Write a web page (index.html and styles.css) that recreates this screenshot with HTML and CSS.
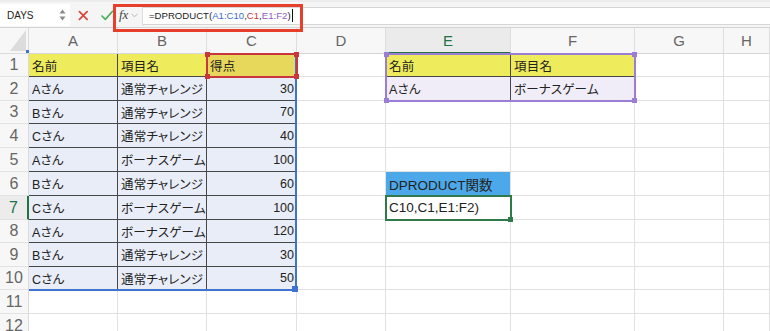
FILE: index.html
```html
<!DOCTYPE html>
<html lang="ja">
<head>
<meta charset="utf-8">
<title>DPRODUCT</title>
<link rel="stylesheet" href="styles.css">
</head>
<body>
<div class="app">
  <div class="fbar">
    <div class="namebox">
      <span class="nametext">DAYS</span>
      <svg class="spin" width="7" height="12" viewBox="0 0 7 12"><path d="M3.5 0.5 L6.5 4.5 L0.5 4.5 Z" fill="#8a8a8a"/><path d="M3.5 11.5 L6.5 7.5 L0.5 7.5 Z" fill="#8a8a8a"/></svg>
    </div>
    <div class="fbtns">
      <svg width="11" height="11" viewBox="0 0 11 11"><path d="M1.5 1.5 L9.5 9.5 M9.5 1.5 L1.5 9.5" stroke="#d9453b" stroke-width="1.8" stroke-linecap="round"/></svg>
      <svg width="13" height="11" viewBox="0 0 13 11"><path d="M1 6 L4.5 9.5 L12 1.2" stroke="#4cae5a" stroke-width="1.7" fill="none" stroke-linecap="round" stroke-linejoin="round"/></svg>
    </div>
    <div class="fxzone">
      <span class="fx">fx</span>
      <svg width="7" height="5" viewBox="0 0 7 5"><path d="M0.5 0.8 L3.5 3.8 L6.5 0.8" stroke="#b5b5b5" stroke-width="1" fill="none"/></svg>
    </div>
    <div class="finput">=DPRODUCT(<span class="rb">A1:C10</span>,<span class="rr">C1</span>,<span class="rp">E1:F2</span>)<span class="caret"></span></div>
    <div class="redbox"></div>
  </div>

  <div class="sheet">
    <div class="corner"><svg width="29" height="26" viewBox="0 0 29 26"><path d="M26 2 L26 23 L10 23 Z" fill="#dcdcdc"/></svg></div>
    <div class="ch">A</div><div class="ch">B</div><div class="ch">C</div><div class="ch">D</div><div class="ch act">E</div><div class="ch">F</div><div class="ch">G</div><div class="ch">H</div>

    <div class="rh">1</div>
    <div class="c jp y vr hb">名前</div><div class="c jp y vr hb">項目名</div><div class="c jp ys hb">得点</div><div class="c"></div>
    <div class="c jp y vr hb">名前</div><div class="c jp y hb">項目名</div><div class="c"></div><div class="c"></div>

    <div class="rh">2</div>
    <div class="c jp d vr hb">Aさん</div><div class="c jp d vr hb">通常チャレンジ</div><div class="c d hb num">30</div><div class="c"></div>
    <div class="c jp l vr">Aさん</div><div class="c jp l">ボーナスゲーム</div><div class="c"></div><div class="c"></div>

    <div class="rh">3</div>
    <div class="c jp d vr hb">Bさん</div><div class="c jp d vr hb">通常チャレンジ</div><div class="c d hb num">70</div><div class="c"></div>
    <div class="c"></div><div class="c"></div><div class="c"></div><div class="c"></div>

    <div class="rh">4</div>
    <div class="c jp d vr hb">Cさん</div><div class="c jp d vr hb">通常チャレンジ</div><div class="c d hb num">40</div><div class="c"></div>
    <div class="c"></div><div class="c"></div><div class="c"></div><div class="c"></div>

    <div class="rh">5</div>
    <div class="c jp d vr hb">Aさん</div><div class="c jp d vr hb">ボーナスゲーム</div><div class="c d hb num">100</div><div class="c"></div>
    <div class="c"></div><div class="c"></div><div class="c"></div><div class="c"></div>

    <div class="rh">6</div>
    <div class="c jp d vr hb">Bさん</div><div class="c jp d vr hb">通常チャレンジ</div><div class="c d hb num">60</div><div class="c"></div>
    <div class="c bl">DPRODUCT関数</div><div class="c"></div><div class="c"></div><div class="c"></div>

    <div class="rh act">7</div>
    <div class="c jp d vr hb">Cさん</div><div class="c jp d vr hb">ボーナスゲーム</div><div class="c d hb num">100</div><div class="c"></div>
    <div class="c">C10,C1,E1:F2)</div><div class="c"></div><div class="c"></div><div class="c"></div>

    <div class="rh">8</div>
    <div class="c jp d vr hb">Aさん</div><div class="c jp d vr hb">ボーナスゲーム</div><div class="c d hb num">120</div><div class="c"></div>
    <div class="c"></div><div class="c"></div><div class="c"></div><div class="c"></div>

    <div class="rh">9</div>
    <div class="c jp d vr hb">Bさん</div><div class="c jp d vr hb">通常チャレンジ</div><div class="c d hb num">30</div><div class="c"></div>
    <div class="c"></div><div class="c"></div><div class="c"></div><div class="c"></div>

    <div class="rh">10</div>
    <div class="c jp d vr">Cさん</div><div class="c jp d vr">通常チャレンジ</div><div class="c d num">50</div><div class="c"></div>
    <div class="c"></div><div class="c"></div><div class="c"></div><div class="c"></div>

    <div class="rh">11</div>
    <div class="c"></div><div class="c"></div><div class="c"></div><div class="c"></div>
    <div class="c"></div><div class="c"></div><div class="c"></div><div class="c"></div>

    <div class="rh">12</div>
    <div class="c"></div><div class="c"></div><div class="c"></div><div class="c"></div>
    <div class="c"></div><div class="c"></div><div class="c"></div><div class="c"></div>

    <div class="rng blue"><i class="hd tl"></i><i class="hd br"></i></div>
    <div class="rng red"><i class="hd tl"></i><i class="hd tr"></i><i class="hd bl2"></i><i class="hd br"></i></div>
    <div class="rng purple"><i class="hd tl"></i><i class="hd tr"></i><i class="hd bl2"></i><i class="hd br"></i></div>
    <div class="rng green"><i class="hd br"></i></div>
  </div>
</div>
</body>
</html>
```

FILE: styles.css
```css
* { box-sizing: border-box; }
html, body { margin: 0; padding: 0; background: #fff; }
body { width: 770px; height: 331px; overflow: hidden; }

.app { width: 770px; height: 331px; overflow: hidden; }

.fbar {
  position: relative;
  height: 28px;
  display: flex;
  align-items: flex-start;
  background: #f5f5f5;
  border-top: 2px solid #ececec;
}
.namebox {
  width: 70px;
  height: 22px;
  margin-top: 2px;
  background: #fff;
  display: flex;
  align-items: center;
  justify-content: space-between;
  padding: 0 4px 0 7px;
}
.nametext {
  font-family: "Liberation Sans", Arial, sans-serif;
  font-size: 10px;
  color: #222;
}
.spin { display: block; }
.fbtns {
  display: flex;
  align-items: center;
  gap: 12px;
  height: 22px;
  margin-top: 2px;
  padding-left: 8px;
  width: 43px;
}
.fxzone {
  display: flex;
  align-items: center;
  gap: 3px;
  height: 22px;
  margin-top: 2px;
  padding-left: 6px;
  width: 30px;
  border-right: 1px solid #dcdcdc;
}
.fx {
  font-family: "Liberation Serif", "Times New Roman", serif;
  font-style: italic;
  font-size: 13px;
  color: #444;
}
.finput {
  flex: 1;
  height: 18px;
  margin-top: 5px;
  background: #fff;
  border-top: 1px solid #d6d6d6;
  border-bottom: 1px solid #d6d6d6;
  padding-left: 6px;
  font-family: "Liberation Sans", Arial, sans-serif;
  font-size: 9.6px;
  line-height: 16px;
  color: #222;
  white-space: nowrap;
}
.rb { color: #3b6fc6; }
.rr { color: #c7343b; }
.rp { color: #8b5cc4; }
.caret {
  display: inline-block;
  width: 1px;
  height: 13px;
  background: #111;
  vertical-align: -3px;
  margin-left: 1px;
}
.redbox {
  position: absolute;
  left: 113px;
  top: 2px;
  width: 190px;
  height: 28px;
  border: 3px solid #e6402c;
  z-index: 5;
}

.sheet {
  position: relative;
  display: grid;
  grid-template-columns: 29px 89px 89px 90px 89px 125px 124px 89px 46px;
  grid-template-rows: 26px 23px 24px 23px 24px 24px 24px 24px 23px 24px 23px 24px 24px;
  border-top: 1px solid #d4d4d4;
  margin-top: -1px;
}
.corner {
  background: #f7f7f7;
  border-right: 1px solid #dadada;
  border-bottom: 1px solid #dadada;
}
.corner svg { display: block; }
.ch {
  background: #f7f7f7;
  border-right: 1px solid #dedede;
  border-bottom: 1px solid #d6d6d6;
  display: flex;
  align-items: center;
  justify-content: center;
  font-family: "Liberation Sans", Arial, sans-serif;
  font-size: 15px;
  color: #666;
}
.ch.act {
  background: #ebebeb;
  color: #217346;
  border-bottom: 2px solid #217346;
}
.rh {
  background: #f7f7f7;
  border-right: 1px solid #dadada;
  border-bottom: 1px solid #e2e2e2;
  display: flex;
  align-items: center;
  justify-content: center;
  font-family: "Liberation Sans", Arial, sans-serif;
  font-size: 16px;
  color: #666;
}
.rh.act {
  background: #ececec;
  color: #217346;
  border-right: 2px solid #217346;
}
.c {
  border-right: 1px solid #e1e1e1;
  border-bottom: 1px solid #e1e1e1;
  display: flex;
  align-items: center;
  padding: 0 3px;
  font-family: "Liberation Sans", "Noto Sans CJK JP", sans-serif;
  font-size: 13.5px;
  color: #222;
  white-space: nowrap;
  overflow: hidden;
}
.jp {
  font-size: 12.5px;
  font-feature-settings: "palt";
  letter-spacing: 0.2px;
}
.y { background: #eeeb5d; }
.ys { background: #e7d75a; }
.d { background: #e9edf8; }
.l { background: #f0ecf8; }
.bl { background: #4ca8e9; }
.vr { border-right: 1px solid #474747; }
.hb { border-bottom: 1px solid #474747; }
.num { justify-content: flex-end; padding-right: 2px; font-size: 12.5px; }

.rng { position: absolute; pointer-events: none; }
.rng .hd { position: absolute; width: 5px; height: 5px; }
.blue {
  left: 29px; top: 25px; width: 268px; height: 238px;
  border-right: 2px solid #3f73d0;
  border-bottom: 2px solid #3f73d0;
}
.blue .hd { background: #3f73d0; }
.blue .tl { left: -1px; top: 0; width: 3px; height: 3px; }
.blue .br { right: -4px; bottom: -4px; width: 6px; height: 6px; }
.red {
  left: 206px; top: 25px; width: 92px; height: 25px;
  border: 2px solid #c9363d;
}
.red .hd { background: #c9363d; }
.purple {
  left: 385px; top: 25px; width: 251px; height: 49px;
  border: 2px solid #9a7ed6;
}
.purple .hd { background: #9a7ed6; }
.green {
  left: 385px; top: 167px; width: 127px; height: 26px;
  border: 2px solid #2f7a4a;
}
.green .hd { background: #2f7a4a; }
.hd.tl { left: -3px; top: -3px; }
.hd.tr { right: -3px; top: -3px; }
.hd.bl2 { left: -3px; bottom: -3px; }
.hd.br { right: -3px; bottom: -3px; }
```
